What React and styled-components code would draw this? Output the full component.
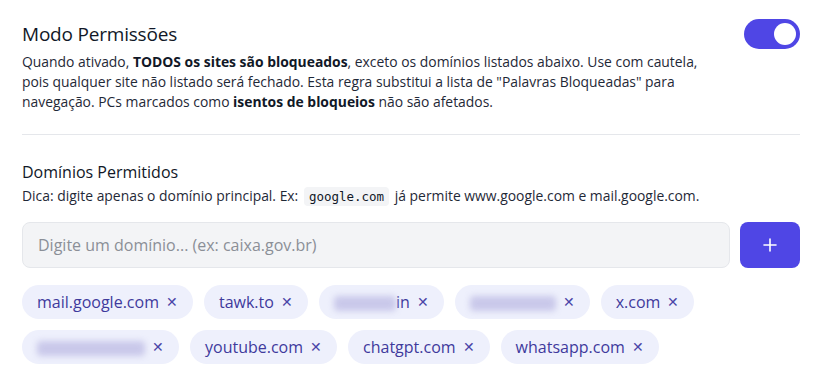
import React from "react";
import styled, { createGlobalStyle } from "styled-components";

const GlobalStyle = createGlobalStyle`
  body {
    margin: 0;
    background: #ffffff;
    font-family: "Open Sans", "Noto Sans", sans-serif;
  }
`;

const Page = styled.div`
  padding: 18px 21px 20px 22px;
`;

const Header = styled.div`
  display: flex;
  justify-content: space-between;
  align-items: flex-start;
`;

const Title = styled.h2`
  margin: 3px 0 0;
  font-size: 19px;
  font-weight: 500;
  color: #111827;
  line-height: 26px;
  letter-spacing: -0.2px;
`;

const Toggle = styled.div`
  width: 56px;
  height: 30px;
  border-radius: 15px;
  background: #4f46e5;
  display: flex;
  align-items: center;
  justify-content: flex-end;
  padding: 0 4px;
  box-sizing: border-box;
  margin-top: 1px;
  &::after {
    content: "";
    width: 22px;
    height: 22px;
    border-radius: 50%;
    background: #ffffff;
  }
`;

const Text = styled.p`
  margin: ${(p) => (p.top ? "3px 0 0" : "0")};
  font-size: 13.9px;
  line-height: 20px;
  color: #1f2937;
  white-space: nowrap;
  b {
    font-weight: 700;
    color: #111827;
  }
`;

const Divider = styled.hr`
  border: none;
  border-top: 1px solid #e5e7eb;
  margin: 22px 0 0;
`;

const SubTitle = styled.h3`
  margin: 26px 0 3px;
  font-size: 16px;
  font-weight: 500;
  color: #111827;
  line-height: 22px;
`;

const Code = styled.code`
  font-family: "DejaVu Sans Mono", monospace;
  font-size: 12.5px;
  background: #f3f4f6;
  border-radius: 4px;
  padding: 2px 5px;
  margin: 0 2px;
  color: #111827;
`;

const InputRow = styled.div`
  display: flex;
  gap: 10px;
  margin-top: 15px;
`;

const Input = styled.input`
  flex: 1;
  height: 46px;
  box-sizing: border-box;
  border: 1px solid #e5e7eb;
  border-radius: 8px;
  background: #f3f4f6;
  padding: 0 15px;
  font-family: inherit;
  font-size: 16px;
  color: #111827;
  outline: none;
  &::placeholder {
    color: #8b8f97;
  }
`;

const AddButton = styled.button`
  width: 60px;
  height: 46px;
  border: none;
  border-radius: 8px;
  background: #4f46e5;
  color: #ffffff;
  display: flex;
  align-items: center;
  justify-content: center;
  padding: 0;
`;

const Chips = styled.div`
  display: flex;
  flex-wrap: wrap;
  gap: 11px 11px;
  margin-top: 17px;
`;

const Chip = styled.span`
  display: inline-flex;
  align-items: center;
  height: 34px;
  padding: 0 15px 0 15px;
  border-radius: 17px;
  background: #eef0fc;
  color: #3f3a9c;
  font-size: 16px;
  gap: 7px;
`;

const Hidden = styled.span`
  display: inline-block;
  width: ${(p) => p.w}px;
  height: 15px;
  background: #c9c8ea;
  filter: blur(3px);
  border-radius: 4px;
  vertical-align: middle;
`;

const Remove = styled.span`
  font-size: 14px;
  color: #4b45a8;
  line-height: 1;
`;

const domains = [
  { label: "mail.google.com" },
  { label: "tawk.to" },
  { hidden: 62, suffix: "in" },
  { hidden: 86, suffix: "" },
  { label: "x.com" },
  { hidden: 108, suffix: "" },
  { label: "youtube.com" },
  { label: "chatgpt.com" },
  { label: "whatsapp.com" },
];

export default function App() {
  return (
    <Page>
      <GlobalStyle />
      <Header>
        <Title>Modo Permissões</Title>
        <Toggle />
      </Header>
      <Text top>
        Quando ativado, <b>TODOS os sites são bloqueados</b>, exceto os domínios listados abaixo. Use com cautela,
        <br />
        pois qualquer site não listado será fechado. Esta regra substitui a lista de "Palavras Bloqueadas" para
        <br />
        navegação. PCs marcados como <b>isentos de bloqueios</b> não são afetados.
      </Text>
      <Divider />
      <SubTitle>Domínios Permitidos</SubTitle>
      <Text>
        Dica: digite apenas o domínio principal. Ex: <Code>google.com</Code> já permite www.google.com e mail.google.com.
      </Text>
      <InputRow>
        <Input placeholder="Digite um domínio... (ex: caixa.gov.br)" />
        <AddButton>
          <svg width="16" height="16" viewBox="0 0 16 16" fill="none" stroke="#fff" strokeWidth="1.6" strokeLinecap="round">
            <path d="M8 2v12M2 8h12" />
          </svg>
        </AddButton>
      </InputRow>
      <Chips>
        {domains.map((d, i) => (
          <Chip key={i}>
            {d.hidden ? (
              <span>
                <Hidden w={d.hidden} />
                {d.suffix}
              </span>
            ) : (
              d.label
            )}
            <Remove>✕</Remove>
          </Chip>
        ))}
      </Chips>
    </Page>
  );
}
